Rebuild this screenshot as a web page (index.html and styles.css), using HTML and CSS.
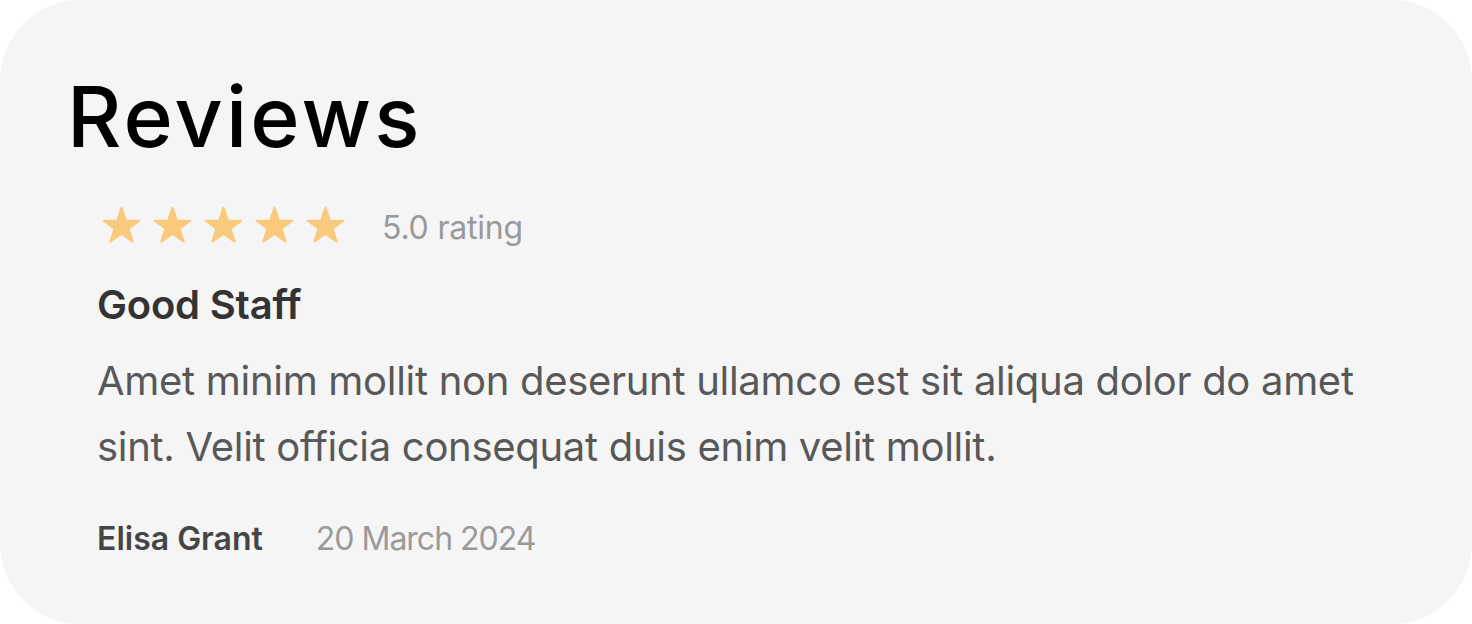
FILE: index.html
```html
<!DOCTYPE html>
<html lang="en">
<head>
<meta charset="utf-8">
<title>Reviews</title>
<link rel="stylesheet" href="styles.css">
</head>
<body>
<section class="card">
  <h1 class="title">Reviews</h1>
  <div class="review">
    <div class="rating-row">
      <div class="stars">
        <svg class="star" viewBox="0 0 24 24"><path d="M12 1.6c.3 0 .5.2.6.5l2.4 7.1h7.4c.6 0 .8.7.4 1.1l-6 4.4 2.3 7.1c.2.6-.5 1-.9.7L12 18.1l-6.2 4.4c-.5.3-1.1-.1-.9-.7l2.3-7.1-6-4.4c-.5-.4-.2-1.1.4-1.1H9l2.4-7.1c.1-.3.3-.5.6-.5z"/></svg>
        <svg class="star" viewBox="0 0 24 24"><path d="M12 1.6c.3 0 .5.2.6.5l2.4 7.1h7.4c.6 0 .8.7.4 1.1l-6 4.4 2.3 7.1c.2.6-.5 1-.9.7L12 18.1l-6.2 4.4c-.5.3-1.1-.1-.9-.7l2.3-7.1-6-4.4c-.5-.4-.2-1.1.4-1.1H9l2.4-7.1c.1-.3.3-.5.6-.5z"/></svg>
        <svg class="star" viewBox="0 0 24 24"><path d="M12 1.6c.3 0 .5.2.6.5l2.4 7.1h7.4c.6 0 .8.7.4 1.1l-6 4.4 2.3 7.1c.2.6-.5 1-.9.7L12 18.1l-6.2 4.4c-.5.3-1.1-.1-.9-.7l2.3-7.1-6-4.4c-.5-.4-.2-1.1.4-1.1H9l2.4-7.1c.1-.3.3-.5.6-.5z"/></svg>
        <svg class="star" viewBox="0 0 24 24"><path d="M12 1.6c.3 0 .5.2.6.5l2.4 7.1h7.4c.6 0 .8.7.4 1.1l-6 4.4 2.3 7.1c.2.6-.5 1-.9.7L12 18.1l-6.2 4.4c-.5.3-1.1-.1-.9-.7l2.3-7.1-6-4.4c-.5-.4-.2-1.1.4-1.1H9l2.4-7.1c.1-.3.3-.5.6-.5z"/></svg>
        <svg class="star" viewBox="0 0 24 24"><path d="M12 1.6c.3 0 .5.2.6.5l2.4 7.1h7.4c.6 0 .8.7.4 1.1l-6 4.4 2.3 7.1c.2.6-.5 1-.9.7L12 18.1l-6.2 4.4c-.5.3-1.1-.1-.9-.7l2.3-7.1-6-4.4c-.5-.4-.2-1.1.4-1.1H9l2.4-7.1c.1-.3.3-.5.6-.5z"/></svg>
      </div>
      <span class="rating-text">5.0 rating</span>
    </div>
    <h2 class="review-title">Good Staff</h2>
    <p class="review-body">Amet minim mollit non deserunt ullamco est sit aliqua dolor do amet sint. Velit officia consequat duis enim velit mollit.</p>
    <div class="meta">
      <span class="author">Elisa Grant</span>
      <span class="date">20 March 2024</span>
    </div>
  </div>
</section>
</body>
</html>
```
FILE: styles.css
```css
html, body {
  margin: 0;
  padding: 0;
  background: #ffffff;
}

body {
  font-family: Inter, "Noto Sans", sans-serif;
}

.card {
  box-sizing: border-box;
  width: 1472px;
  height: 624px;
  background: #f5f5f5;
  border-radius: 80px;
  padding: 75px 67px 0;
}

.title {
  margin: 0;
  font-size: 84px;
  line-height: 1;
  font-weight: 500;
  color: #000000;
  letter-spacing: 3.2px;
}

.review {
  padding-left: 30px;
}

.rating-row {
  display: flex;
  align-items: flex-start;
  gap: 36px;
  margin-top: 45px;
}

.stars {
  display: flex;
  gap: 10px;
  padding-left: 4px;
}

.star {
  width: 41px;
  height: 41px;
  fill: #f9c97c;
  display: block;
}

.rating-text {
  font-size: 32px;
  line-height: 48px;
  color: #9a9a9a;
  letter-spacing: -0.2px;
}

.review-title {
  margin: 29px 0 0;
  font-size: 40px;
  line-height: 48px;
  font-weight: 600;
  color: #333333;
  letter-spacing: -0.2px;
}

.review-body {
  margin: 19px 0 0;
  max-width: 1300px;
  font-size: 40px;
  line-height: 66px;
  color: #585858;
  letter-spacing: -0.3px;
}

.meta {
  display: flex;
  gap: 53px;
  margin-top: 39px;
  font-size: 32px;
  line-height: 40px;
}

.author {
  font-weight: 600;
  color: #454545;
  letter-spacing: 0;
}

.date {
  color: #9a9a9a;
  letter-spacing: -1px;
}
```
